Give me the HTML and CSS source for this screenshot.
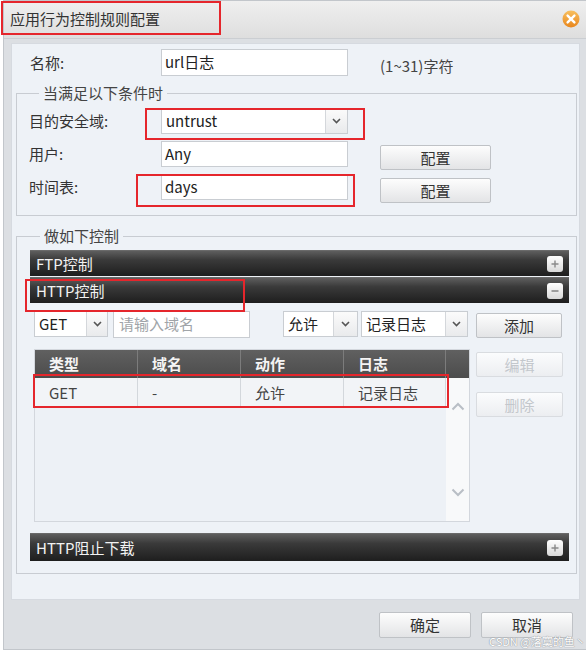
FILE: index.html
```html
<!DOCTYPE html>
<html lang="zh-CN">
<head>
<meta charset="utf-8">
<title>应用行为控制规则配置</title>
<link rel="stylesheet" href="styles.css">
</head>
<body>
<div class="dialog">
  <div class="titlebar">
    <span class="title">应用行为控制规则配置</span>
    <span class="close">
      <svg width="18" height="18" viewBox="0 0 18 18">
        <defs><linearGradient id="og" x1="0" y1="0" x2="0" y2="1"><stop offset="0" stop-color="#f8c060"/><stop offset="1" stop-color="#e8861c"/></linearGradient></defs>
        <circle cx="9" cy="9" r="8.5" fill="url(#og)"/>
        <path d="M5.6 5.6 L12.4 12.4 M12.4 5.6 L5.6 12.4" stroke="#fff" stroke-width="2.4" stroke-linecap="round"/>
      </svg>
    </span>
  </div>
  <div class="panel">
    <div class="name-row">
      <span class="lbl">名称:</span>
      <div class="field w187">url日志</div>
      <span class="hint">(1~31)字符</span>
    </div>
    <fieldset class="group g1">
      <legend>当满足以下条件时</legend>
      <div class="frow">
        <span class="lbl">目的安全域:</span>
        <div class="select w187"><span class="val">untrust</span><span class="arrow a22"><svg width="9" height="6" viewBox="0 0 9 6"><path d="M1 1 L4.5 4.5 L8 1" fill="none" stroke="#555" stroke-width="1.6"/></svg></span></div>
      </div>
      <div class="frow">
        <span class="lbl">用户:</span>
        <div class="field w187">Any</div>
        <button class="btn cfg">配置</button>
      </div>
      <div class="frow">
        <span class="lbl">时间表:</span>
        <div class="field w187">days</div>
        <button class="btn cfg">配置</button>
      </div>
    </fieldset>
    <fieldset class="group g2">
      <legend>做如下控制</legend>
      <div class="bar"><span>FTP控制</span><span class="tog"><svg width="10" height="10" viewBox="0 0 10 10"><path d="M5 1.5 V8.5 M1.5 5 H8.5" stroke="#8a8a8a" stroke-width="1.4"/></svg></span></div>
      <div class="bar"><span>HTTP控制</span><span class="tog"><svg width="10" height="10" viewBox="0 0 10 10"><path d="M1.5 5 H8.5" stroke="#8a8a8a" stroke-width="1.6"/></svg></span></div>
      <div class="ctrl-row">
        <div class="select w74"><span class="val">GET</span><span class="arrow a21"><svg width="9" height="6" viewBox="0 0 9 6"><path d="M1 1 L4.5 4.5 L8 1" fill="none" stroke="#555" stroke-width="1.6"/></svg></span></div>
        <div class="field w137 ph">请输入域名</div>
        <div class="select w75 gapl"><span class="val">允许</span><span class="arrow a24"><svg width="9" height="6" viewBox="0 0 9 6"><path d="M1 1 L4.5 4.5 L8 1" fill="none" stroke="#555" stroke-width="1.6"/></svg></span></div>
        <div class="select w107"><span class="val">记录日志</span><span class="arrow a22"><svg width="9" height="6" viewBox="0 0 9 6"><path d="M1 1 L4.5 4.5 L8 1" fill="none" stroke="#555" stroke-width="1.6"/></svg></span></div>
        <button class="btn add">添加</button>
      </div>
      <div class="table-area">
        <div class="table">
          <div class="thead">
            <span class="c c1">类型</span><span class="c c2">域名</span><span class="c c3">动作</span><span class="c c4">日志</span><span class="c c5"></span>
          </div>
          <div class="tbody">
            <div class="rows">
              <div class="tr">
                <span class="c c1">GET</span><span class="c c2">-</span><span class="c c3">允许</span><span class="c c4">记录日志</span>
              </div>
            </div>
            <div class="scroll">
              <svg width="14" height="9" viewBox="0 0 14 9"><path d="M1.5 7.5 L7 2 L12.5 7.5" fill="none" stroke="#b9bec5" stroke-width="2"/></svg>
              <svg width="14" height="9" viewBox="0 0 14 9"><path d="M1.5 1.5 L7 7 L12.5 1.5" fill="none" stroke="#b9bec5" stroke-width="2"/></svg>
            </div>
          </div>
        </div>
        <div class="side">
          <button class="btn dis">编辑</button>
          <button class="btn dis">删除</button>
        </div>
      </div>
      <div class="bar tall"><span>HTTP阻止下载</span><span class="tog"><svg width="10" height="10" viewBox="0 0 10 10"><path d="M5 1.5 V8.5 M1.5 5 H8.5" stroke="#8a8a8a" stroke-width="1.4"/></svg></span></div>
    </fieldset>
  </div>
  <div class="footer">
    <button class="btn foot">确定</button>
    <button class="btn foot">取消</button>
  </div>
</div>
<div class="mark m1"></div>
<div class="mark m2"></div>
<div class="mark m3"></div>
<div class="mark m4"></div>
<div class="mark m5"></div>
<div class="wm">CSDN @落寞的鱼丶</div>
</body>
</html>
```
FILE: styles.css
```css
* { box-sizing: border-box; }
html, body { margin: 0; padding: 0; }
body {
  position: relative;
  width: 586px;
  height: 653px;
  overflow: hidden;
  background: #ffffff;
  font-family: "Noto Sans CJK SC", "Liberation Sans", sans-serif;
  font-size: 15px;
  color: #333;
}
.dialog {
  margin-left: 3px;
  width: 584px;
  height: 650px;
  background: #dcdfe3;
  border: 1px solid #c2c6cb;
  border-right: none;
}
.titlebar {
  height: 38px;
  display: flex;
  align-items: center;
  justify-content: space-between;
  padding: 0 6px 2px 6px;
  background: linear-gradient(#efefef, #dedede);
  border-bottom: 1px solid #cbced2;
}
.title { font-size: 15px; color: #333; line-height: 20px; }
.close { display: flex; margin-right: 1px; }
.close svg { display: block; }

.panel {
  margin: 4px 0 0 7px;
  width: 569px;
  height: 557px;
  background: #eef2f7;
  border: 1px solid #d6dae0;
  padding: 5px 3px 0 4px;
}
.name-row {
  display: flex;
  align-items: center;
  height: 27px;
  padding-left: 14px;
}
.lbl { width: 131px; line-height: 20px; color: #333; }
.g1 .lbl { width: 132px; }
.field {
  height: 27px;
  background: #fff;
  border: 1px solid #c9cdd2;
  padding-left: 3px;
  line-height: 24px;
  color: #222;
  white-space: nowrap;
}
.w187 { width: 187px; }
.w137 { width: 137px; margin-left: 5px; }
.ph { color: #a0a4a8; padding-left: 5px; }
.hint { margin-left: 32px; color: #444; line-height: 20px; margin-top: 6px; }

.group {
  margin: 0;
  border: 1px solid #c8ccd2;
  width: 561px;
}
.group legend {
  padding: 0 4px;
  margin-left: 10px;
  line-height: 20px;
  color: #444;
}
.g1 {
  margin-top: 7px;
  padding: 5px 12px 15px 12px;
}
.frow {
  display: flex;
  align-items: flex-start;
  height: 26px;
}
.frow + .frow { margin-top: 7px; }
.frow .lbl { margin-top: 3px; }
.frow .field { height: 26px; }

.select {
  display: flex;
  height: 26px;
  background: #fff;
  border: 1px solid #c9cdd2;
}
.select .val {
  flex: 1;
  padding-left: 4px;
  line-height: 24px;
  color: #222;
  white-space: nowrap;
  overflow: hidden;
}
.select .arrow {
  display: flex;
  align-items: center;
  justify-content: center;
  border-left: 1px solid #d4d7db;
  background: linear-gradient(#fbfbfb, #e9eaec);
}
.a21 { width: 21px; }
.a22 { width: 22px; }
.a24 { width: 24px; }
.w74 { width: 74px; }
.w75 { width: 75px; }
.w107 { width: 107px; margin-left: 3px; }
.gapl { margin-left: 33px; }

.btn {
  font-family: inherit;
  font-size: 15px;
  color: #333;
  height: 25px;
  padding: 0;
  line-height: 22px;
  background: linear-gradient(#fdfdfd, #e3e4e6);
  border: 1px solid #bfc2c6;
  border-radius: 2px;
}
.cfg { width: 111px; margin-left: 32px; margin-top: 4px; }

.g2 {
  margin-top: 10px;
  padding: 4px 7px 12px 13px;
}
.bar {
  display: flex;
  align-items: center;
  justify-content: space-between;
  height: 26px;
  padding: 0 6px 0 6px;
  background: linear-gradient(#5e5e5e 0%, #3a3a3a 35%, #1e1e1e 100%);
  border-top: 1px solid #6a6a6a;
  color: #f2f2f2;
  line-height: 20px;
}
.bar + .bar { margin-top: 1px; }
.bar.tall { height: 28px; margin-top: 11px; }
.tog {
  width: 16px;
  height: 16px;
  border-radius: 3px;
  background: linear-gradient(#ffffff, #d9d9d9);
  display: flex;
  align-items: center;
  justify-content: center;
}
.tog svg { display: block; }

.ctrl-row {
  display: flex;
  align-items: flex-start;
  margin-top: 8px;
  height: 26px;
  padding-left: 4px;
}
.add { width: 86px; margin-left: 8px; margin-top: 2px; }

.table-area {
  display: flex;
  align-items: flex-start;
  margin-top: 12px;
  padding-left: 4px;
}
.table {
  width: 436px;
  height: 173px;
  border: 1px solid #d3d7dd;
  background: #edf1f6;
  display: flex;
  flex-direction: column;
}
.thead {
  display: flex;
  height: 28px;
  background: linear-gradient(#606060, #4c4c4c);
  color: #f4f4f4;
  font-weight: bold;
}
.c {
  display: block;
  padding-left: 14px;
  line-height: 28px;
  white-space: nowrap;
}
.c1 { width: 103px; }
.c2 { width: 103px; }
.c3 { width: 103px; }
.c4 { width: 102px; }
.c5 { width: 23px; padding: 0; }
.thead .c1, .thead .c2, .thead .c3, .thead .c4 { border-right: 1px solid #7c7c7c; }
.tbody {
  flex: 1;
  display: flex;
}
.rows { width: 411px; }
.tr {
  display: flex;
  height: 30px;
  background: #f2f4f7;
  border-bottom: 1px solid #cfd3d9;
  color: #444;
}
.tr .c { line-height: 29px; border-right: 1px solid #d3d7dc; }
.scroll {
  width: 23px;
  background: #f8f9fa;
  display: flex;
  flex-direction: column;
  align-items: center;
  justify-content: space-between;
  padding: 24px 0 24px 0;
}
.scroll svg { display: block; }
.side {
  display: flex;
  flex-direction: column;
  margin-left: 6px;
  padding-top: 3px;
}
.dis {
  width: 87px;
  color: #c3c7cc;
  border-color: #d9dce0;
  background: linear-gradient(#fbfcfd, #eceef1);
}
.dis + .dis { margin-top: 15px; }

.footer {
  display: flex;
  justify-content: flex-end;
  padding: 12px 14px 0 0;
}
.foot { width: 92px; height: 26px; }
.foot + .foot { margin-left: 10px; }

.mark {
  position: absolute;
  border: 2px solid #e5262c;
}
.m1 { left: 1px; top: 1px; width: 220px; height: 34px; }
.m2 { left: 145px; top: 108px; width: 220px; height: 32px; }
.m3 { left: 136px; top: 174px; width: 219px; height: 33px; }
.m4 { left: 25px; top: 279px; width: 220px; height: 33px; }
.m5 { left: 33px; top: 374px; width: 416px; height: 34px; }
.wm {
  position: absolute;
  left: 489px;
  top: 634px;
  font-size: 11px;
  line-height: 14px;
  color: #ffffff;
  text-shadow: 0 0 1px #8a8e94, 0 0 1px #8a8e94;
  white-space: nowrap;
}
```
